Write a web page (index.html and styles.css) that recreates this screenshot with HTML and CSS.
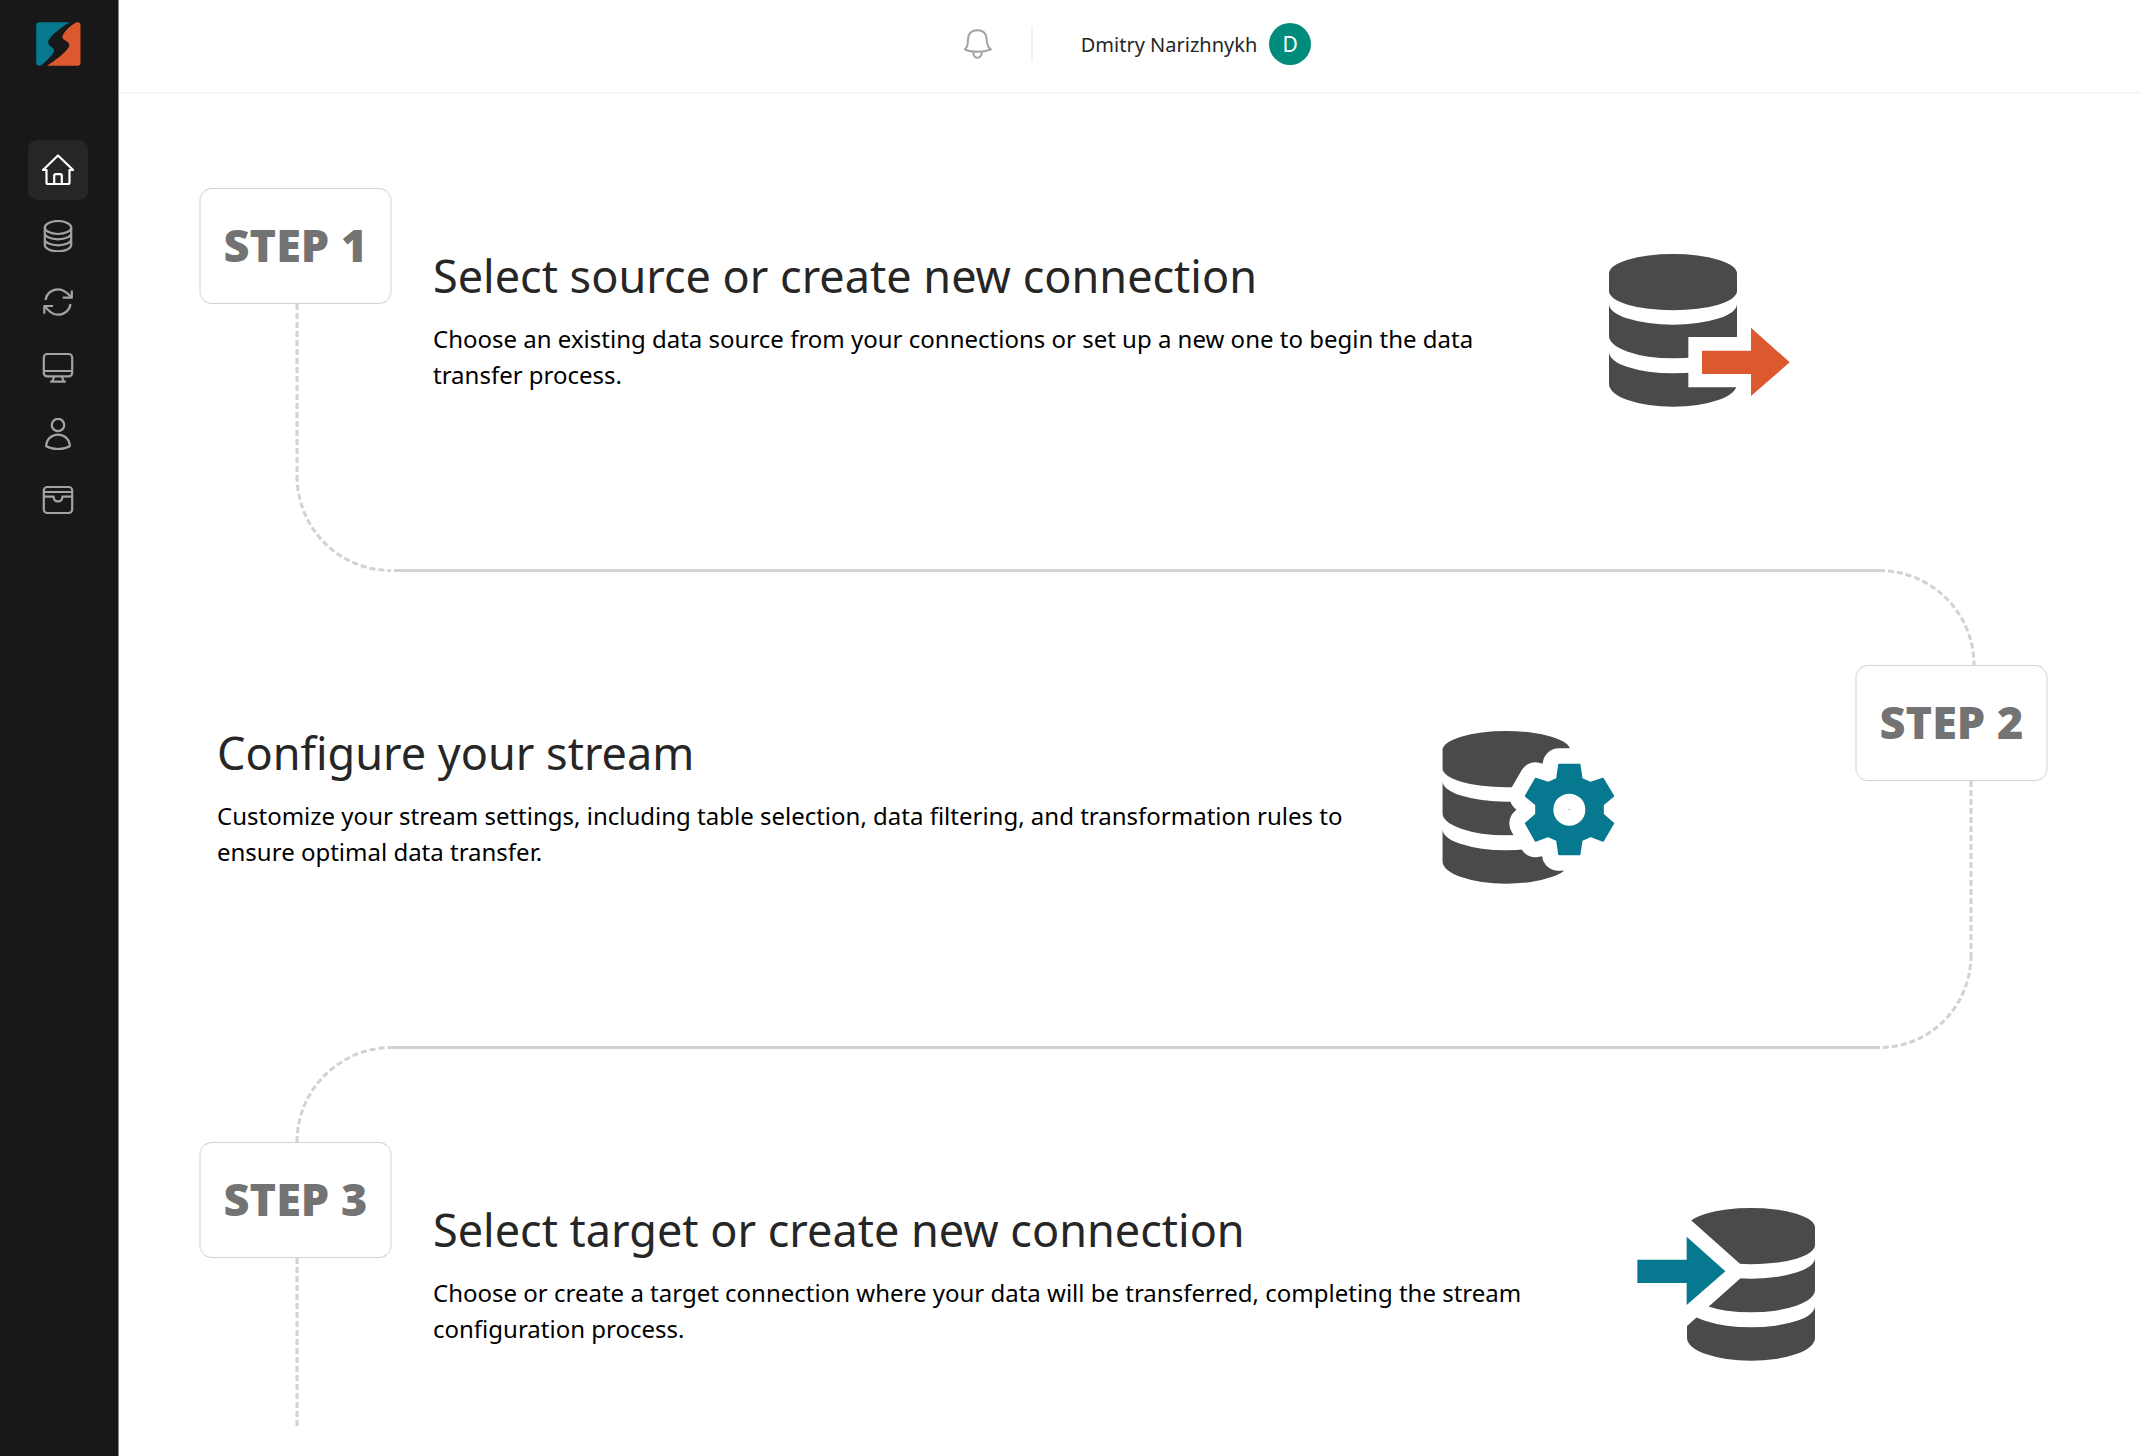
FILE: index.html
```html
<!DOCTYPE html>
<html lang="en">
<head>
<meta charset="utf-8">
<meta name="viewport" content="width=device-width, initial-scale=1">
<title>Getting started</title>
<link rel="stylesheet" href="styles.css">
</head>
<body>
<svg class="sprite" aria-hidden="true">
  <symbol id="cylinder" viewBox="0 0 384 459">
    <path d="M0 58a192 58 0 0 1 384 0v53a192 58 0 0 1-384 0zM0 150a192 62 0 0 0 384 0v96a192 67 0 0 1-384 0zM0 294a192 64 0 0 0 384 0v96a192 68 0 0 1-384 0z"/>
  </symbol>
</svg>
<div class="app">
  <aside class="sidebar">
    <a class="logo" href="#" aria-label="Dashboard">
      <svg viewBox="109 66 134 132" width="45" height="44">
        <path fill="#067890" d="M118 67H210C190 78 160 100 148 118C141 130 148 137 156 142C168 150 162 160 150 172C142 182 132 190 124 196Q122 197 118 197Q109 197 109 188V76Q109 67 118 67Z"/>
        <path fill="#dc582e" d="M230 67h4q8 0 8 9V188q0 9-9 9H142C155 188 180 172 198 153C208 142 212 134 204 127C194 118 186 118 188 108C194 92 215 75 230 67Z"/>
      </svg>
    </a>
    <nav class="menu" aria-label="Main">
      <a class="menu-item active" href="#" aria-label="Home"><svg viewBox="0 0 32 32"><path d="M1 16H4.500V28.500a1.500 1.500 0 0 0 1.500 1.500H26a1.500 1.500 0 0 0 1.500-1.500V16H31.200L16 1.500ZM12.200 30V21.700a1.500 1.500 0 0 1 1.500-1.500h4.600a1.500 1.500 0 0 1 1.500 1.500V30"/></svg></a>
      <a class="menu-item" href="#" aria-label="Connections"><svg viewBox="0 0 32 32"><ellipse cx="16" cy="7.500" rx="13.200" ry="6.500"/><path d="M2.800 7.500V25c0 3.500 5.900 6.300 13.200 6.300S29.200 28.500 29.200 25V7.500M2.800 13.500c0 3.200 5.900 5.800 13.200 5.800s13.200-2.600 13.200-5.800M2.800 19.500c0 3.200 5.900 5.800 13.200 5.800s13.200-2.600 13.200-5.800"/></svg></a>
      <a class="menu-item" href="#" aria-label="Streams"><svg viewBox="0 0 32 32"><path d="M3.500 14C4.200 8 9.500 3.300 16.200 3.300c5 0 8.800 2.700 13.200 8.100M29.800 4.500V11.700H20.800M28.500 18C27.800 24 22.500 28.700 16 28.700c-5 0-8.800-2.700-13.200-8.600M2.300 27.700V20H11"/></svg></a>
      <a class="menu-item" href="#" aria-label="Monitoring"><svg viewBox="0 0 32 32"><rect x="1.800" y="2" width="28.400" height="22.400" rx="3.500"/><path d="M1.800 19H30.200M12 24.500L10.500 29.500M20 24.500L21.500 29.500M8.200 29.700H23.800"/></svg></a>
      <a class="menu-item" href="#" aria-label="Account"><svg viewBox="0 0 32 32"><circle cx="16" cy="7" r="6.200"/><path d="M4.200 28.300C4.200 21.500 9.500 16.600 16 16.600S27.800 21.500 27.800 28.300Q22 31.200 16 31.200T4.200 28.300Z"/></svg></a>
      <a class="menu-item" href="#" aria-label="Billing"><svg viewBox="0 0 32 32"><rect x="1.800" y="3" width="28.400" height="26" rx="3.500"/><path d="M1.800 8H30.200M1.800 12.700H11.600C11.600 15.600 13 17.400 16 17.400S20.400 15.600 20.400 12.700H30.200"/></svg></a>
    </nav>
  </aside>

  <div class="page">
    <header class="topbar">
      <button class="bell" type="button" aria-label="Notifications">
        <svg viewBox="72 84 84 96" width="28" height="32"><path d="M74 148C83 142 83 135 84 118C85 100 96 91 112 91S139 100 140 118C141 135 143 142 152 148C130 158 95 158 74 148ZM99 156c1 10 5 17 13 17s13-7 14-17"/></svg>
      </button>
      <span class="divider"></span>
      <a class="user" href="#"><span class="user-name">Dmitry Narizhnykh</span><span class="avatar">D</span></a>
    </header>

    <main class="steps">
      <div class="rail left one">
        <div class="badge">STEP 1</div>
        <svg class="path" viewBox="0 0 193 268" width="193" height="268"><path class="dash" d="M98 0V172"/><path class="dash" d="M98 172A94 94.500 0 0 0 192 266.500"/></svg>
      </div>
      <section class="step inset one">
        <div class="text">
          <h2>Select source or create new connection</h2>
          <p>Choose an existing data source from your connections or set up a new one to begin the data transfer process.</p>
        </div>
        <svg class="picture" viewBox="0 0 720 459" width="240" height="153" aria-hidden="true">
          <use href="#cylinder" x="30" y="0" width="384" height="459" fill="#4a4a4a"/>
          <path fill="#fff" d="M268 249H420V400H268Z"/>
          <path fill="#dc582e" d="M309 290H456V221L572 325L456 426V360H309Z"/>
        </svg>
      </section>
      <div class="line one"></div>
      <svg class="turn right after-one" viewBox="0 0 193 96" width="193" height="96"><path d="M0 1.500H24"/><path class="dash" d="M24 1.500A95 94.500 0 0 1 119 96"/></svg>

      <section class="step wide two">
        <div class="text">
          <h2>Configure your stream</h2>
          <p>Customize your stream settings, including table selection, data filtering, and transformation rules to ensure optimal data transfer.</p>
        </div>
        <svg class="picture" viewBox="-111 63 720 459" width="240" height="153" aria-hidden="true">
          <use href="#cylinder" x="67" y="63" width="384" height="459" fill="#4a4a4a"/>
          <path fill="#fff" stroke="#fff" stroke-width="98" stroke-linejoin="round" d="M417 164H479L485 206L512 216L549 206L580 258L550 284V313L580 340L549 393L512 381L487 391L481 433H415L409 391L384 381L347 393L317 340L346 313V284L317 258L347 206L384 216L411 206Z"/>
          <path fill="#067890" stroke="#067890" stroke-width="5" stroke-linejoin="round" d="M417 164H479L485 206L512 218L549 206L580 258L549 284V313L580 340L549 393L512 379L485 391L479 433H417L411 391L384 379L347 393L317 340L348 313V284L317 258L347 206L384 218L411 206Z"/>
          <circle cx="448" cy="299" r="48" fill="#fff"/>
          <path stroke="#999" stroke-width="2" d="M445 298h7"/>
        </svg>
      </section>
      <div class="rail right two">
        <div class="badge">STEP 2</div>
        <svg class="path" viewBox="0 0 193 268" width="193" height="268"><path class="dash" d="M116 0V174"/><path class="dash" d="M116 174A91 92.500 0 0 1 25 266.500"/><path d="M25 266.500H0"/></svg>
      </div>
      <div class="line two"></div>
      <svg class="turn left after-two" viewBox="0 0 193 96" width="193" height="96"><path class="dash" d="M98 96A95 94.500 0 0 1 193 1.500"/></svg>

      <div class="rail left three">
        <div class="badge">STEP 3</div>
        <svg class="path" viewBox="0 0 193 169" width="193" height="169"><path class="dash" d="M98 0V169"/></svg>
      </div>
      <section class="step inset three">
        <div class="text">
          <h2>Select target or create new connection</h2>
          <p>Choose or create a target connection where your data will be transferred, completing the stream configuration process.</p>
        </div>
        <svg class="picture" viewBox="0 0 720 459" width="240" height="153" aria-hidden="true">
          <use href="#cylinder" x="264" y="0" width="384" height="459" fill="#4a4a4a"/>
          <path fill="#fff" d="M230 0H235L448 190L264 354H230Z"/>
          <path fill="#067890" d="M115 155H263V86L379 190L263 291V225H115Z"/>
        </svg>
      </section>
    </main>
  </div>
</div>
</body>
</html>
```
FILE: styles.css
```css
* { box-sizing: border-box; }

body {
  margin: 0;
  background: #fff;
  color: #000;
  font-family: "Noto Sans", "Open Sans", sans-serif;
}

svg { display: block; flex: none; }
.sprite { position: absolute; width: 0; height: 0; }

.app { display: flex; min-height: 100vh; }

/* Sidebar */
.sidebar {
  flex: none;
  width: 119px;
  padding: 22px 2px 0 0;
  display: flex;
  flex-direction: column;
  align-items: center;
  gap: 74px;
  background: #181818;
  border-right: 1px solid #8c8c8c;
}
.menu { display: flex; flex-direction: column; gap: 6px; }
.menu-item {
  width: 60px;
  height: 60px;
  display: grid;
  place-items: center;
  border-radius: 9px;
  color: #a3a3a3;
}
.menu-item.active { background: #262626; color: #fff; }
.menu-item svg {
  width: 32px;
  height: 32px;
  fill: none;
  stroke: currentColor;
  stroke-width: 2.2;
  stroke-linejoin: round;
}

/* Header */
.page { flex: 1; min-width: 0; }
.topbar {
  height: 94px;
  padding-bottom: 4px;
  display: flex;
  align-items: center;
  justify-content: center;
  border-bottom: 2px solid #f6f6f6;
}
.bell { padding: 0 16px; border: 0; background: none; }
.bell svg { fill: none; stroke: #a3a3a3; stroke-width: 6; }
.divider { width: 2px; height: 36px; margin: 0 48px 0 23px; background: #f0f0f0; }
.user {
  display: flex;
  align-items: center;
  gap: 12px;
  color: #262626;
  text-decoration: none;
}
.user-name { font-size: 20px; }
.avatar {
  width: 42px;
  height: 42px;
  display: grid;
  place-items: center;
  border-radius: 50%;
  background: #008b7a;
  color: #fff;
  font-size: 21px;
}

/* Steps: side columns carry the badges and bends, the middle the text */
.steps {
  display: grid;
  grid-template-columns: 193px 1fr 193px;
  grid-template-rows: 384px 93px 384px 93px auto;
  padding: 94px 92px 29px 80px;
}
.one { grid-row: 1; }
.two { grid-row: 3; }
.three { grid-row: 5; }
.left { grid-column: 1; }
.right { grid-column: 3; }
.inset { grid-column: 2; padding-left: 41px; }
.wide { grid-column: 1 / 3; padding-left: 18px; }
.after-one { grid-row: 2; }
.after-two { grid-row: 4; }

.badge {
  height: 116px;
  padding-bottom: 4px;
  display: grid;
  place-items: center;
  border: solid #d2d2d2;
  border-width: 1px 2px;
  border-left-color: #e8e8e8;
  border-right-color: #e8e8e8;
  border-radius: 13px;
  color: #737373;
  font-size: 45px;
  font-weight: 900;
}

.path, .turn { fill: none; stroke: #d2d2d2; stroke-width: 3; }
.dash { stroke-dasharray: 6 3; }
.turn { margin-top: -3px; }
.line { grid-column: 2; align-self: end; height: 3px; background: #d2d2d2; }
.line.one { margin-left: 2px; }

.step { display: flex; gap: 40px; align-items: flex-start; padding-top: 65px; }
.text { flex: 0 1 1126px; }
.picture { margin-top: 1px; }
h2 {
  margin: 0 0 22px;
  color: #262626;
  font-size: 45px;
  font-weight: 400;
  line-height: 46px;
}
p { margin: 0; font-size: 24px; line-height: 36px; }
```
